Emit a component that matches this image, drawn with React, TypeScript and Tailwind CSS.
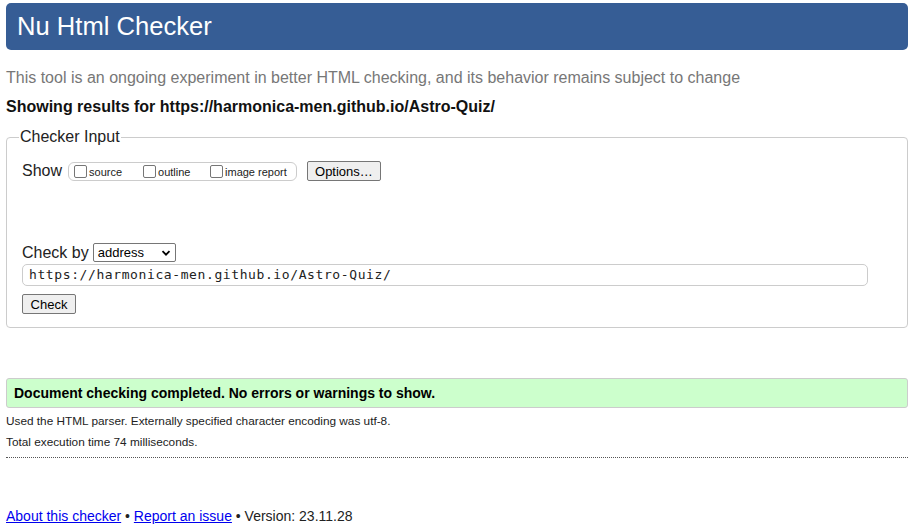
import * as React from 'react';

const font = { fontFamily: '"Liberation Sans", Arial, sans-serif' };

function Check({ label }: { label: string }) {
  return (
    <label className="flex items-center gap-[2px] text-[11px] text-[#222]">
      <span className="w-[13px] h-[13px] border border-[#767676] rounded-[2px] bg-white inline-block" />
      <span className="mt-[3px]">{label}</span>
    </label>
  );
}

export default function App() {
  return (
    <div className="w-[916px] h-[527px] bg-white text-[#111] pl-[6px] pr-[8px] pt-[3px] overflow-hidden" style={font}>
      {/* Bandeau */}
      <div className="h-[47px] rounded-[5px] bg-[#365d95] flex items-center pl-[11px]">
        <h1 className="text-[25.6px] leading-none text-white">Nu Html Checker</h1>
      </div>

      <p className="mt-[19px] text-[16px] leading-[18px] text-[#777]">
        This tool is an ongoing experiment in better HTML checking, and its behavior remains subject to change
      </p>
      <p className="mt-[11px] text-[16px] leading-[18px] font-bold text-[#111]">
        Showing results for https://harmonica-men.github.io/Astro-Quiz/
      </p>

      {/* Formulaire */}
      <fieldset className="mt-[12px] border border-[#ccc] rounded-[4px] px-[15px] pb-[12px] h-[200px]">
        <legend className="text-[16px] leading-[18px] px-[1px] ml-[-3px] text-[#222]">Checker Input</legend>

        <div className="flex items-center mt-[15px]">
          <span className="text-[16px] leading-[18px] text-[#222] mr-[6px]">Show</span>
          <div className="flex items-center h-[19px] border border-[#ccc] rounded-[6px] pl-[5px] pr-[6px] w-[229px]">
            <div className="w-[69px]"><Check label="source" /></div>
            <div className="w-[67px]"><Check label="outline" /></div>
            <Check label="image report" />
          </div>
          <button className="ml-[10px] h-[20px] px-[7px] text-[13px] leading-none border border-[#767676] rounded-[2px] bg-[#efefef] text-black">
            Options…
          </button>
        </div>

        <div className="flex items-center mt-[62px]">
          <span className="text-[16px] leading-[18px] text-[#222] mr-[4px]">Check by</span>
          <div className="flex items-center justify-between w-[83px] h-[19px] border border-[#767676] rounded-[2px] pl-[4px] pr-[4px] text-[13px] text-black">
            <span>address</span>
            <svg width="10" height="10" viewBox="0 0 10 10" fill="none" stroke="#000" strokeWidth="1.8">
              <path d="M1.5 3.2 L5 6.7 L8.5 3.2" />
            </svg>
          </div>
        </div>

        <div className="mt-[2px] h-[22px] w-[846px] border border-[#ccc] rounded-[5px] flex items-center pl-[6px] text-[13px] tracking-[0.6px] text-[#222]" style={{ fontFamily: '"DejaVu Sans Mono", "Liberation Mono", monospace' }}>
          https://harmonica-men.github.io/Astro-Quiz/
        </div>

        <button className="mt-[8px] h-[20px] w-[54px] text-[13px] leading-none border border-[#767676] rounded-[2px] bg-[#efefef] text-black">
          Check
        </button>
      </fieldset>

      {/* Résultat */}
      <div className="mt-[50px] h-[30px] border border-[#ccc] rounded-[3px] bg-[#ccffcc] flex items-center pl-[7px]">
        <p className="text-[14px] font-bold text-black">Document checking completed. No errors or warnings to show.</p>
      </div>
      <p className="mt-[6px] text-[11.8px] leading-[14px] text-[#222]">
        Used the HTML parser. Externally specified character encoding was utf-8.
      </p>
      <p className="mt-[7px] text-[11.8px] leading-[14px] text-[#222]">Total execution time 74 milliseconds.</p>
      <div className="mt-[8px] border-t border-dotted border-[#555]" />

      <p className="mt-[50px] text-[14px] leading-[16px] text-[#222]">
        <a href="#" className="text-[#0000ee] underline">About this checker</a>
        {' • '}
        <a href="#" className="text-[#0000ee] underline">Report an issue</a>
        {' • Version: 23.11.28'}
      </p>
    </div>
  );
}
